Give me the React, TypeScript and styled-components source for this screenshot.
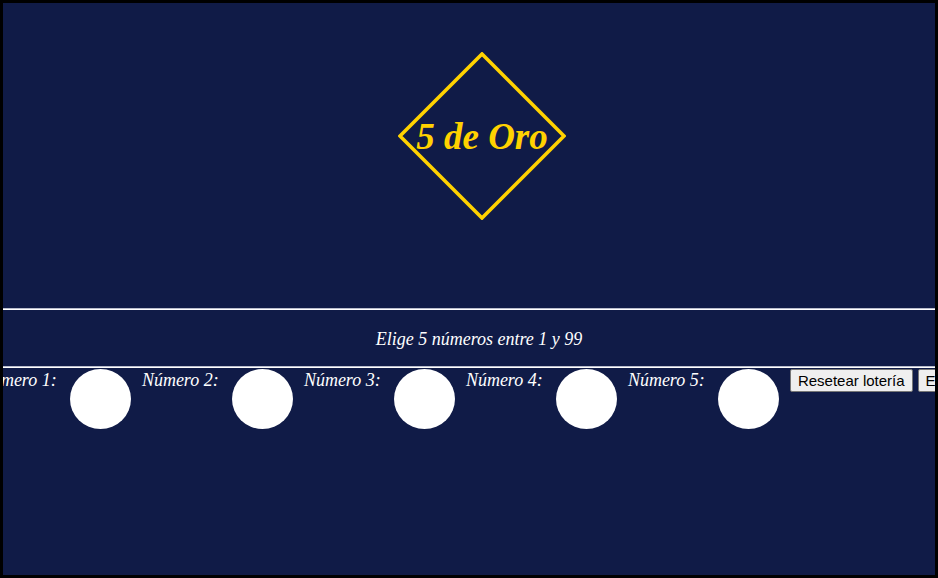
import React from 'react'
import styled, { createGlobalStyle } from 'styled-components'

const GlobalStyle = createGlobalStyle`
  html, body {
    margin: 0;
    padding: 0;
    background: #000;
  }
  * {
    box-sizing: border-box;
  }
`

const numeros = [1, 2, 3, 4, 5]

export default function App() {
  return (
    <>
      <GlobalStyle />
      <Page>
        <Header>
          <Diamond>
            <DiamondShape viewBox="0 0 168 168" aria-hidden>
              <polygon
                points="84,2 166,84 84,166 2,84"
                fill="none"
                stroke="#ffd200"
                strokeWidth="3.6"
              />
            </DiamondShape>
            <Title>5 de Oro</Title>
          </Diamond>
        </Header>
        <Divider />
        <Subtitle>Elige 5 números entre 1 y 99</Subtitle>
        <Divider />
        <Row>
          {numeros.map((n) => (
            <Pick key={n}>
              <Label>Número {n}:</Label>
              <Ball />
            </Pick>
          ))}
          <Buttons>
            <Button>Resetear lotería</Button>
            <Button>Enviar</Button>
          </Buttons>
        </Row>
      </Page>
    </>
  )
}

const Page = styled.div`
  height: 100vh;
  border: 3px solid #000;
  background-color: #101b47;
  overflow: hidden;
  font-family: 'Liberation Serif', 'Times New Roman', serif;
  color: #fff;
`

const Header = styled.header`
  display: flex;
  justify-content: center;
  padding: 49px 0 88px 26px;
`

const Diamond = styled.div`
  position: relative;
  width: 168px;
  height: 168px;
  display: flex;
  align-items: center;
  justify-content: center;
`

const DiamondShape = styled.svg`
  position: absolute;
  inset: 0;
  width: 168px;
  height: 168px;
`

const Title = styled.h1`
  position: relative;
  margin: 0;
  font-size: 37px;
  font-weight: bold;
  font-style: italic;
  color: #ffd200;
  white-space: nowrap;
`

const Divider = styled.hr`
  margin: 0;
  height: 0;
  border: none;
  border-top: 1px solid #b8bccc;
  border-bottom: 1px solid #fff;
`

const Subtitle = styled.p`
  margin: 0;
  height: 56px;
  display: flex;
  align-items: center;
  justify-content: center;
  padding: 2px 0 0 20px;
  font-size: 18px;
  font-style: italic;
`

const Row = styled.div`
  display: flex;
  justify-content: center;
  align-items: flex-start;
  padding-left: 18px;
`

const Pick = styled.div`
  display: flex;
  align-items: flex-start;
  flex-shrink: 0;
`

const Label = styled.label`
  width: 78px;
  margin-right: 12px;
  padding-top: 2px;
  font-size: 18px;
  font-style: italic;
  white-space: nowrap;
`

const Ball = styled.div`
  width: 61px;
  height: 60px;
  margin: 1px 11px 0 0;
  border-radius: 50%;
  background-color: #fff;
`

const Buttons = styled.div`
  display: flex;
  gap: 5px;
  flex-shrink: 0;
  margin-top: 1px;
`

const Button = styled.button`
  font-family: 'Liberation Sans', Arial, sans-serif;
  font-size: 15px;
  padding: 2px 7px;
  border: 1px solid #767676;
  border-radius: 2px;
  background-color: #efefef;
  color: #000;
  white-space: nowrap;
`
